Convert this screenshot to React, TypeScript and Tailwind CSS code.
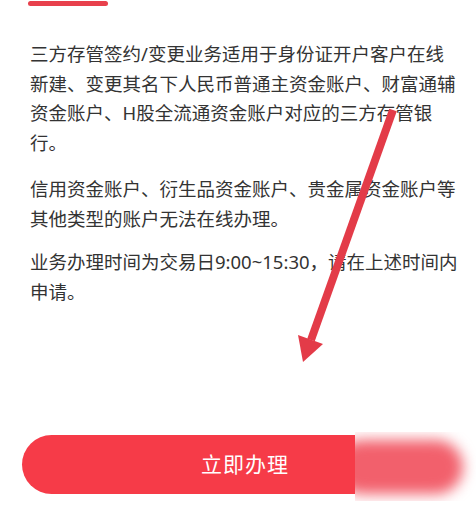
export default function App() {
  return (
    <div
      className="relative flex h-[505px] w-[476px] flex-col overflow-hidden bg-white"
      style={{ fontFamily: '"Noto Sans", "Noto Sans CJK SC", sans-serif' }}
    >
      {/* tab indicator */}
      <div className="ml-[28px] mt-[1px] h-[5px] w-[80px] rounded-full bg-[#e8404c]" />

      {/* notice text */}
      <div className="mt-[33px] w-[460px] pl-[30px] text-[18.5px] leading-[29.5px] text-[#333333]">
        <p className="mb-[17px]">
          三方存管签约/变更业务适用于身份证开户客户在线新建、变更其名下人民币普通主资金账户、财富通辅资金账户、H股全流通资金账户对应的三方存管银行。
        </p>
        <p className="mb-[14px]">
          信用资金账户、衍生品资金账户、贵金属资金账户等其他类型的账户无法在线办理。
        </p>
        <p>业务办理时间为交易日9:00~15:30，请在上述时间内申请。</p>
      </div>

      {/* action button */}
      <div className="mt-auto mb-[11px] pl-[22px]">
        <button className="flex h-[59px] w-[446px] items-center justify-center rounded-full bg-[#f63b48] text-[21px] tracking-[1px] text-white">
          立即办理
        </button>
      </div>

      {/* annotation arrow */}
      <svg className="pointer-events-none absolute left-0 top-0" width="476" height="505" viewBox="0 0 476 505">
        <line x1="393" y1="110" x2="311" y2="340" stroke="#e33b48" strokeWidth="8" />
        <polygon points="298,335 323,344 303,362" fill="#e33b48" />
      </svg>

      {/* blurred watermark */}
      <div className="absolute left-[355px] top-[432px] h-[69px] w-[121px] overflow-hidden bg-white">
        <div className="ml-[-20px] mt-[8px] h-[54px] w-[128px] rounded-full bg-[#f2606c] blur-[7px]" />
      </div>
    </div>
  );
}
